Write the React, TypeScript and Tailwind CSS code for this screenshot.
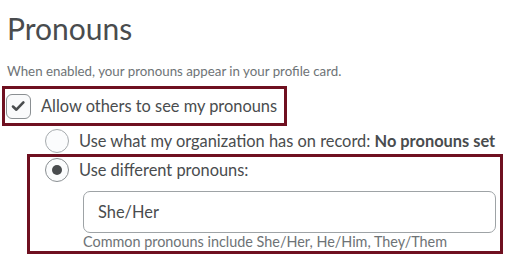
import React from "react";

export default function App() {
  return (
    <div className="w-[511px] h-[260px] overflow-hidden bg-white font-['Lato','Noto_Sans',sans-serif] text-[#494c4e] whitespace-nowrap">
      <h1 className="pt-[10px] pl-[7px] text-[30px] leading-[36px] font-normal">Pronouns</h1>
      <p className="mt-[17px] pl-[7px] text-[13.3px] leading-[17px] text-[#6e7376]">
        When enabled, your pronouns appear in your profile card.
      </p>
      <div className="mt-[6px] ml-[2px] w-[285px] h-[40px] border-[3px] border-[#6f1020] flex items-center pl-[1px]">
        <div className="w-[25px] h-[25px] rounded-[6px] border border-[#8a8f92] bg-[#f9fafb] flex items-center justify-center">
          <svg width="25" height="25" viewBox="0 0 25 25" fill="none">
            <path d="M6.5 12.5 L10.2 16 L17.8 8" stroke="#494c4e" strokeWidth="2.8" strokeLinecap="round" strokeLinejoin="round" />
          </svg>
        </div>
        <span className="ml-[10px] text-[16.4px] leading-[20px]">Allow others to see my pronouns</span>
      </div>
      <div className="h-[28px] flex items-center pl-[45px] pt-[2px]">
        <div className="w-[24px] h-[24px] rounded-full border border-[#a6abae] bg-[#fbfcfd]" />
        <span className="ml-[10px] text-[16.4px] leading-[20px]">
          Use what my organization has on record: <span className="font-bold">No pronouns set</span>
        </span>
      </div>
      <div className="ml-[27px] w-[476px] h-[100px] border-[3px] border-[#6f1020] pl-[15px] pt-[1px]">
        <div className="flex items-center">
          <div className="w-[24px] h-[24px] rounded-full border border-[#8a8f92] bg-[#fbfcfd] flex items-center justify-center">
            <div className="w-[10px] h-[10px] rounded-full bg-[#494c4e]" />
          </div>
          <span className="ml-[10px] text-[16.4px] leading-[20px]">Use different pronouns:</span>
        </div>
        <div className="mt-[9px] ml-[38px] w-[413px] h-[42px] rounded-[7px] border border-[#9ea3a6] bg-white flex items-center pl-[14px] text-[16.4px]">
          She/Her
        </div>
        <div className="ml-[38px] text-[14.4px] leading-[17px] text-[#6e7376]">
          Common pronouns include She/Her, He/Him, They/Them
        </div>
      </div>
    </div>
  );
}
